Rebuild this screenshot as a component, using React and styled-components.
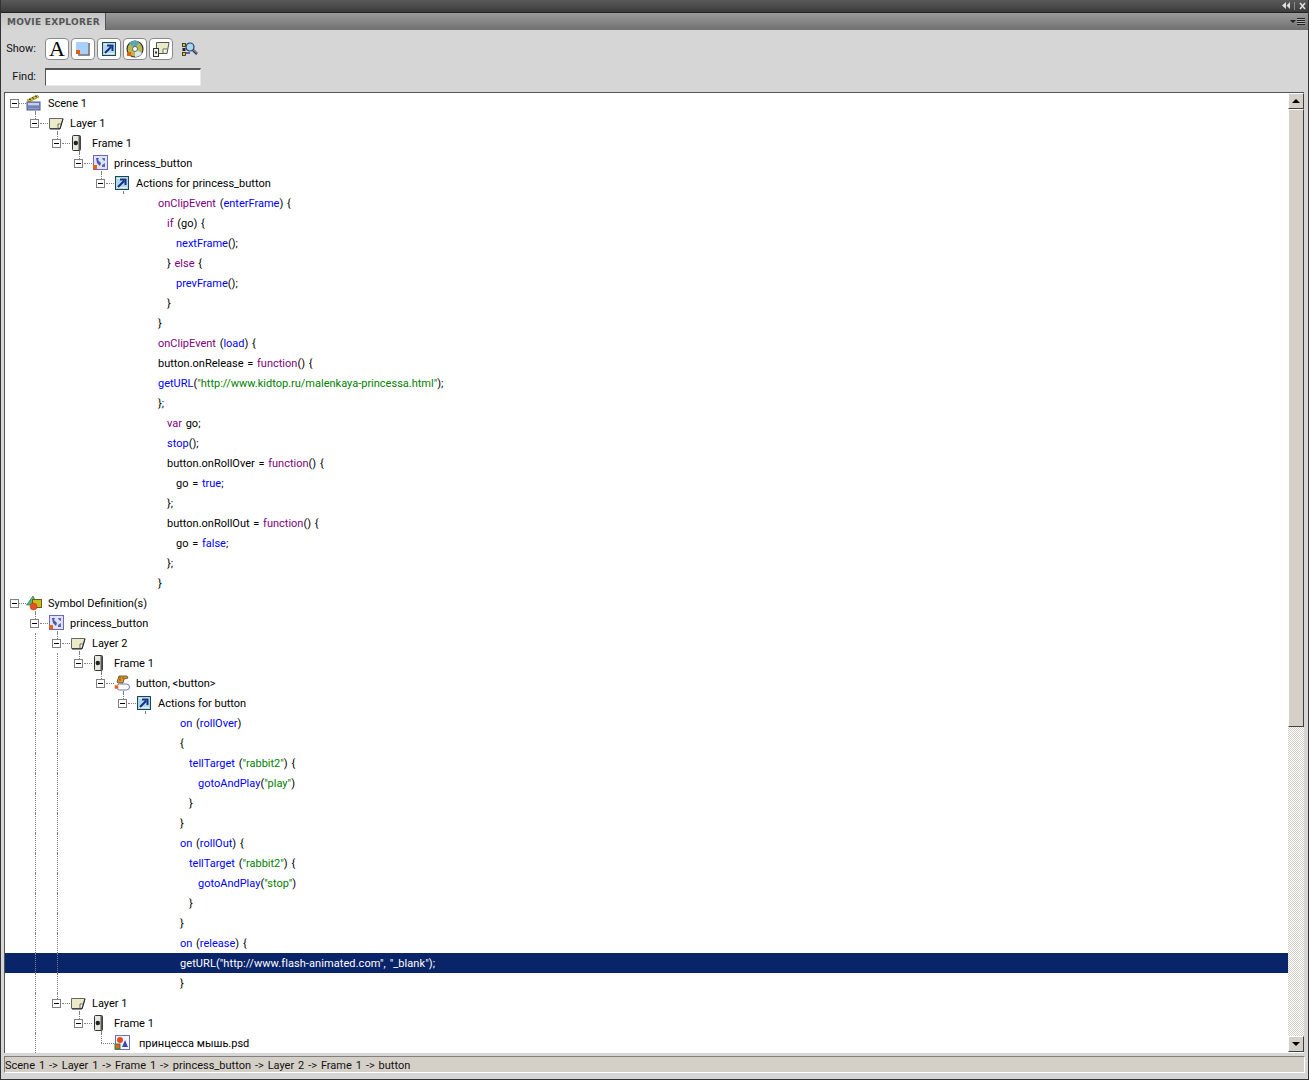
import styled, { createGlobalStyle } from "styled-components";

const GlobalStyle = createGlobalStyle`
  html, body {
    margin: 0;
    padding: 0;
    background: #d6d6d6;
  }
`;

const FONT = `Roboto, "Noto Sans", sans-serif`;

/* icons */
const SceneIcon = () => (
  <svg width="16" height="16" viewBox="0 0 16 16">
    <path d="M1 5 L11 0 L13 2 L3 7 Z" fill="#d8c020" stroke="#6a5a10" strokeWidth="0.5" />
    <path d="M3 4 L5 5 M6 2.5 L8 3.5 M9 1 L11 2" stroke="#333" strokeWidth="1" />
    <rect x="1" y="7" width="13" height="8" fill="#8c9cc8" stroke="#4a5a88" />
    <rect x="2" y="8" width="11" height="2" fill="#c8d0e8" />
    <path d="M2 12 H13" stroke="#5a6a98" />
  </svg>
);
const LayerIcon = () => (
  <svg width="16" height="16" viewBox="0 0 16 16">
    <path d="M1.5 3.5 H15 L12 13.5 H1.5 Z" fill="#ecebc8" stroke="#666" />
    <path d="M10 13 V9 H13.5" fill="#fff" stroke="#666" />
    <path d="M15 4 L12 14 H2" fill="none" stroke="#222" />
  </svg>
);
const FrameIcon = () => (
  <svg width="16" height="16" viewBox="0 0 16 16">
    <rect x="2.5" y="0.5" width="8" height="15" rx="1" fill="#e8e8dc" stroke="#333" />
    <rect x="8.5" y="1" width="2" height="14" fill="#555" />
    <circle cx="5.8" cy="8" r="2.2" fill="#222" />
  </svg>
);
const ClipIcon = () => (
  <svg width="16" height="16" viewBox="0 0 16 16">
    <rect x="1.5" y="0.5" width="14" height="14" fill="#dfe2f8" stroke="#6a68b8" />
    <path d="M4 3 H7 L6 5 L9 8 L8 11 L5 8 Z" fill="#4a58a8" />
    <path d="M10 3 H13 V6 L11 5 Z M10 10 L13 8 V12 H10 Z" fill="#5a68b8" />
    <rect x="1" y="10" width="4" height="4" fill="#f06010" />
  </svg>
);
const ActionsIcon = () => (
  <svg width="16" height="16" viewBox="0 0 16 16">
    <rect x="1.5" y="1.5" width="13" height="13" fill="#b0d8e8" stroke="#1c4a4a" />
    <path d="M3 3 H13 V4 H3 Z M3 12 H13 V13 H3 Z" fill="#e8f4f8" />
    <path d="M4 12 L10 6 M6 4.5 H11.5 V10" fill="none" stroke="#14308a" strokeWidth="2" />
  </svg>
);
const SymbolIcon = () => (
  <svg width="16" height="16" viewBox="0 0 16 16">
    <path d="M0.5 10 L7 1 L9.5 6 V10 Z" fill="#50b880" stroke="#2a7850" strokeWidth="0.7" />
    <rect x="6.5" y="4.5" width="9" height="8" fill="#c8bc20" stroke="#6a6010" />
    <circle cx="7.5" cy="11.5" r="3.5" fill="#e85020" stroke="#b03810" strokeWidth="0.5" />
  </svg>
);
const ButtonIcon = () => (
  <svg width="16" height="16" viewBox="0 0 16 16">
    <path d="M3 7 L5 1 H13 L14 3 L10 4 L9 8 H4 Z" fill="#d89838" stroke="#6a4010" strokeWidth="0.8" />
    <path d="M6 2 V6 M9 2 V4" stroke="#7a4a10" strokeWidth="0.8" />
    <rect x="2.5" y="9" width="13" height="6" rx="3" fill="#fff" stroke="#6a78b0" />
    <rect x="0.5" y="10" width="4" height="4" fill="#f06010" stroke="#fff" strokeWidth="0.5" />
  </svg>
);
const PsdIcon = () => (
  <svg width="16" height="16" viewBox="0 0 16 16">
    <rect x="1.5" y="0.5" width="14" height="14" fill="#f4f4ff" stroke="#6a70b8" />
    <circle cx="6" cy="5" r="3" fill="#e84a20" />
    <path d="M8 12 L11 5 L14 12 Z" fill="#3a48b0" />
    <rect x="1" y="9" width="5" height="5" fill="#f06010" stroke="#208040" />
  </svg>
);
const SquareIcon = () => (
  <svg width="16" height="16" viewBox="0 0 16 16">
    <rect x="1" y="1" width="12" height="12" fill="#a8d0f8" />
    <path d="M14 2 V14 H3" fill="none" stroke="#666" strokeWidth="1.5" />
    <rect x="1" y="9" width="4" height="4" fill="#e06010" />
  </svg>
);
const DiscIcon = () => (
  <svg width="18" height="18" viewBox="0 0 18 18">
    <circle cx="9" cy="9" r="8" fill="#b8b850" stroke="#333" strokeWidth="1.2" />
    <path d="M9 9 L3 3 A8 8 0 0 1 13 2 Z" fill="#58a8b8" />
    <path d="M9 9 L16 13 A8 8 0 0 1 9 17 Z" fill="#d8e8f0" />
    <circle cx="9" cy="9" r="2.5" fill="#fff" stroke="#666" />
    <rect x="1" y="12" width="4" height="4" fill="#e06010" />
  </svg>
);
const LayerFrameIcon = () => (
  <svg width="18" height="18" viewBox="0 0 18 18">
    <path d="M4.5 2.5 H17 L15 13.5 H4.5 Z" fill="#ecebc8" stroke="#555" />
    <path d="M11 13 V9 H15.5" fill="#fff" stroke="#666" />
    <rect x="1.5" y="8.5" width="5" height="8" fill="#f4f4ec" stroke="#333" />
    <rect x="3" y="11.5" width="2" height="2" fill="#333" />
  </svg>
);
const FindIcon = () => (
  <svg width="16" height="16" viewBox="0 0 16 16">
    <rect x="0.5" y="2.5" width="3" height="3" fill="#d8c820" stroke="#222" strokeWidth="0.8" />
    <rect x="0.5" y="7" width="3" height="3" fill="#222" />
    <rect x="0.5" y="11.5" width="3" height="3" fill="#d8c820" stroke="#222" strokeWidth="0.8" />
    <path d="M4 8 H9 M4 12 H8" stroke="#3040a0" strokeWidth="1.5" />
    <circle cx="8" cy="6" r="4" fill="#a8d8f0" stroke="#2a3a70" strokeWidth="1.2" />
    <path d="M11 9 L15 13" stroke="#1a2a88" strokeWidth="2.5" />
    <path d="M11.5 9 L15 12.5" stroke="#e8d020" strokeWidth="1" />
  </svg>
);

const ICONS = {
  scene: SceneIcon,
  layer: LayerIcon,
  frame: FrameIcon,
  clip: ClipIcon,
  actions: ActionsIcon,
  symbol: SymbolIcon,
  button: ButtonIcon,
  psd: PsdIcon,
};

/* colored code tokens */
const k = (t) => ({ t, c: "#800080" });
const b = (t) => ({ t, c: "#0000ff" });
const g = (t) => ({ t, c: "#008000" });

const node = (level, icon, label, opts = {}) => ({ level, icon, label, ...opts });
const code = (x, tokens, opts = {}) => ({ code: true, x, tokens, ...opts });

const s1 = 158;
const s2 = 180;
const both = { guides: [1, 2] };

const ROWS = [
  node(0, "scene", "Scene 1", { stub: true, first: true }),
  node(1, "layer", "Layer 1", { stub: true }),
  node(2, "frame", "Frame 1", { stub: true }),
  node(3, "clip", "princess_button", { stub: true }),
  node(4, "actions", "Actions for princess_button", { stub: true }),
  code(s1, [k("onClipEvent"), " (", b("enterFrame"), ") {"]),
  code(s1 + 9, [k("if"), " (go) {"]),
  code(s1 + 18, [b("nextFrame"), "();"]),
  code(s1 + 9, ["} ", k("else"), " {"]),
  code(s1 + 18, [b("prevFrame"), "();"]),
  code(s1 + 9, ["}"]),
  code(s1, ["}"]),
  code(s1, [k("onClipEvent"), " (", b("load"), ") {"]),
  code(s1, ["button.onRelease = ", k("function"), "() {"]),
  code(s1, [b("getURL"), "(", g('"http://www.kidtop.ru/malenkaya-princessa.html"'), ");"]),
  code(s1, ["};"]),
  code(s1 + 9, [k("var"), " go;"]),
  code(s1 + 9, [b("stop"), "();"]),
  code(s1 + 9, ["button.onRollOver = ", k("function"), "() {"]),
  code(s1 + 18, ["go = ", b("true"), ";"]),
  code(s1 + 9, ["};"]),
  code(s1 + 9, ["button.onRollOut = ", k("function"), "() {"]),
  code(s1 + 18, ["go = ", b("false"), ";"]),
  code(s1 + 9, ["};"]),
  code(s1, ["}"]),
  node(0, "symbol", "Symbol Definition(s)", { stub: true, first: true }),
  node(1, "clip", "princess_button", { stub: true, guides: [1] }),
  node(2, "layer", "Layer 2", { stub: true, ...both }),
  node(3, "frame", "Frame 1", { stub: true, ...both }),
  node(4, "button", "button, <button>", { stub: true, ...both }),
  node(5, "actions", "Actions for button", { stub: true, ...both }),
  code(s2, [b("on"), " (", b("rollOver"), ")"], both),
  code(s2, ["{"], both),
  code(s2 + 9, [b("tellTarget"), " (", g('"rabbit2"'), ") {"], both),
  code(s2 + 18, [b("gotoAndPlay"), "(", g('"play"'), ")"], both),
  code(s2 + 9, ["}"], both),
  code(s2, ["}"], both),
  code(s2, [b("on"), " (", b("rollOut"), ") {"], both),
  code(s2 + 9, [b("tellTarget"), " (", g('"rabbit2"'), ") {"], both),
  code(s2 + 18, [b("gotoAndPlay"), "(", g('"stop"'), ")"], both),
  code(s2 + 9, ["}"], both),
  code(s2, ["}"], both),
  code(s2, [b("on"), " (", b("release"), ") {"], both),
  code(s2, ['getURL("http://www.flash-animated.com", "_blank");'], { ...both, selected: true }),
  code(s2, ["}"], both),
  node(2, "layer", "Layer 1", { stub: true, guides: [1] }),
  node(3, "frame", "Frame 1", { stub: true, guides: [1] }),
  node(4, "psd", "принцесса мышь.psd", { leaf: true, guides: [1] }),
];

const Tree = ({ row }) => {
  const Icon = ICONS[row.icon];
  const guides = row.guides || [];
  const cells = [];
  for (let i = 0; i < row.level; i++) {
    cells.push(<Indent key={i} $line={guides.includes(i)} />);
  }
  return (
    <>
      {cells}
      <ToggleCell $first={row.first} $leaf={row.leaf}>
        {!row.leaf && <Toggle />}
      </ToggleCell>
      <IconCell $stub={row.stub}>
        <Icon />
      </IconCell>
      <Label $leaf={row.leaf}>{row.label}</Label>
    </>
  );
};

const CodeLine = ({ row }) => {
  const guides = row.guides || [];
  return (
    <>
      <Indent $line={guides.includes(0)} />
      <Indent $line={guides.includes(1)} />
      <Indent $line={guides.includes(2)} />
      <Code $x={row.x - 70} $selected={row.selected}>
        {row.tokens.map((tk, i) =>
          typeof tk === "string" ? (
            <span key={i}>{tk}</span>
          ) : (
            <Token key={i} $color={tk.c}>
              {tk.t}
            </Token>
          )
        )}
      </Code>
    </>
  );
};

const App = () => {
  return (
    <>
      <GlobalStyle />
      <Window>
        <TitleBar>
          <svg width="8" height="8" viewBox="0 0 8 8">
            <path d="M4 0 V7 L0 3.5 Z M8 0 V7 L4.5 3.5 Z" fill="#ddd" />
          </svg>
          <Sep />
          <svg width="7" height="8" viewBox="0 0 7 8">
            <path d="M1 1 L6 7 M6 1 L1 7" stroke="#ddd" strokeWidth="1.6" />
          </svg>
        </TitleBar>
        <TabBar>
          <Tab>MOVIE EXPLORER</Tab>
          <MenuBtn>
            <MenuArrow />
            <MenuLines />
          </MenuBtn>
        </TabBar>
        <Panel>
          <ShowRow>
            <FieldLabel>Show:</FieldLabel>
            <Tools>
              <ToolBtn>
                <BigA>A</BigA>
              </ToolBtn>
              <ToolBtn>
                <SquareIcon />
              </ToolBtn>
              <ToolBtn>
                <ActionsIcon />
              </ToolBtn>
              <ToolBtn>
                <DiscIcon />
              </ToolBtn>
              <ToolBtn>
                <LayerFrameIcon />
              </ToolBtn>
              <PlainTool>
                <FindIcon />
              </PlainTool>
            </Tools>
          </ShowRow>
          <FindRow>
            <FieldLabel>Find:</FieldLabel>
            <FindInput />
          </FindRow>
          <TreeBox>
            <TreeList>
              {ROWS.map((row, i) => (
                <Row key={i} $selected={row.selected}>
                  {row.code ? <CodeLine row={row} /> : <Tree row={row} />}
                </Row>
              ))}
            </TreeList>
            <Scrollbar>
              <ScrollBtn>
                <ArrowUp />
              </ScrollBtn>
              <Thumb />
              <Track />
              <ScrollBtn>
                <ArrowDown />
              </ScrollBtn>
            </Scrollbar>
          </TreeBox>
          <StatusBar>Scene 1 -&gt; Layer 1 -&gt; Frame 1 -&gt; princess_button -&gt; Layer 2 -&gt; Frame 1 -&gt; button</StatusBar>
        </Panel>
      </Window>
    </>
  );
};

export default App;

const Window = styled.div`
  width: 1309px;
  height: 1080px;
  display: flex;
  flex-direction: column;
  box-sizing: border-box;
  overflow: hidden;
  font-family: ${FONT};
  font-size: 11px;
  color: #000;
  background: #d6d6d6;
  border-left: 1px solid #333;
  border-right: 1px solid #333;
  border-bottom: 1px solid #333;
`;

const TitleBar = styled.div`
  height: 13px;
  flex-shrink: 0;
  display: flex;
  align-items: center;
  justify-content: flex-end;
  gap: 4px;
  padding-right: 2px;
  box-sizing: border-box;
  background: linear-gradient(#5a5a5a, #3c3c3c);
  border-bottom: 1px solid #222;
`;

const Sep = styled.span`
  width: 1px;
  height: 8px;
  background: #888;
`;

const TabBar = styled.div`
  height: 17px;
  flex-shrink: 0;
  display: flex;
  align-items: stretch;
  justify-content: space-between;
  background: linear-gradient(#9a9a9a, #707070);
`;

const Tab = styled.div`
  width: 105px;
  padding-left: 6px;
  box-sizing: border-box;
  font-family: "DejaVu Sans", sans-serif;
  font-size: 9px;
  font-weight: 700;
  letter-spacing: 0.3px;
  line-height: 18px;
  color: #555;
  white-space: nowrap;
  background: linear-gradient(#c4c4c4, #d6d6d6);
  border-right: 1px solid #555;
`;

const MenuBtn = styled.div`
  display: flex;
  align-items: center;
  gap: 1px;
  padding-right: 3px;
`;

const MenuArrow = styled.span`
  width: 0;
  height: 0;
  border-left: 3px solid transparent;
  border-right: 3px solid transparent;
  border-top: 3px solid #222;
`;

const MenuLines = styled.span`
  width: 8px;
  height: 7px;
  background: repeating-linear-gradient(#222 0 1px, #aaa 1px 2px);
`;

const Panel = styled.div`
  flex: 1;
  min-height: 0;
  display: flex;
  flex-direction: column;
  padding: 0 3px 6px;
`;

const ShowRow = styled.div`
  display: flex;
  align-items: center;
  height: 22px;
  margin-top: 8px;
`;

const FieldLabel = styled.div`
  width: 41px;
  flex-shrink: 0;
  text-align: right;
  padding-right: 9px;
  box-sizing: border-box;
  line-height: 15px;
  height: 16px;
  color: #111;
`;

const Tools = styled.div`
  display: flex;
  align-items: center;
  gap: 2px;
`;

const ToolBtn = styled.div`
  width: 24px;
  height: 22px;
  display: flex;
  align-items: center;
  justify-content: center;
  box-sizing: border-box;
  background: #fff;
  border: 1px solid #8a8a8a;
  border-radius: 4px;
`;

const PlainTool = styled.div`
  width: 16px;
  height: 22px;
  margin-left: 7px;
  display: flex;
  align-items: center;
`;

const BigA = styled.span`
  font-family: "Liberation Serif", serif;
  font-size: 22px;
  line-height: 20px;
`;

const FindRow = styled.div`
  display: flex;
  align-items: center;
  height: 18px;
  margin-top: 8px;
`;

const FindInput = styled.input`
  width: 156px;
  height: 18px;
  padding: 0;
  box-sizing: border-box;
  background: #fff;
  border: 1px solid #e8e8e8;
  border-top: 2px solid #555;
  border-left: 1px solid #555;
  outline: none;
`;

const TreeBox = styled.div`
  flex: 1;
  min-height: 0;
  margin-top: 6px;
  margin-right: 1px;
  display: flex;
  border-top: 1px solid #555;
  border-left: 1px solid #555;
  background: #fff;
`;

const TreeList = styled.div`
  flex: 1;
  min-width: 0;
  overflow: hidden;
  background: #fff;
`;

const Row = styled.div`
  height: 20px;
  display: flex;
  align-items: stretch;
  color: ${(p) => (p.$selected ? "#fff" : "#000")};
  background: ${(p) => (p.$selected ? "#0a246a" : "transparent")};
  white-space: nowrap;
  line-height: 22px;

  & > :first-child {
    margin-left: -1px;
  }
`;

const Indent = styled.div`
  width: 22px;
  flex-shrink: 0;
  position: relative;

  &::before {
    content: "";
    display: ${(p) => (p.$line ? "block" : "none")};
    position: absolute;
    left: 9px;
    top: 0;
    bottom: 0;
    border-left: 1px dotted #808080;
  }
`;

const ToggleCell = styled.div`
  width: 22px;
  flex-shrink: 0;
  position: relative;
  display: flex;
  align-items: center;
  padding-left: ${(p) => (p.$first ? "6px" : "4px")};
  box-sizing: border-box;

  &::before {
    content: "";
    display: ${(p) => (p.$first ? "none" : "block")};
    position: absolute;
    left: 9px;
    top: 0;
    height: ${(p) => (p.$leaf ? "10px" : "6px")};
    border-left: 1px dotted #808080;
  }

  &::after {
    content: "";
    position: absolute;
    left: ${(p) => (p.$leaf ? "9px" : "14px")};
    right: 0;
    top: 10px;
    border-top: 1px dotted #808080;
  }
`;

const Toggle = styled.div`
  width: 9px;
  height: 9px;
  box-sizing: border-box;
  background: #fff;
  border: 1px solid #808080;
  position: relative;

  &::after {
    content: "";
    position: absolute;
    left: 1px;
    top: 3px;
    width: 5px;
    height: 1px;
    background: #000;
  }
`;

const IconCell = styled.div`
  width: 22px;
  flex-shrink: 0;
  position: relative;
  display: flex;
  align-items: center;

  svg {
    display: block;
  }

  &::after {
    content: "";
    display: ${(p) => (p.$stub ? "block" : "none")};
    position: absolute;
    left: 9px;
    top: 18px;
    bottom: 0;
    border-left: 1px dotted #808080;
  }
`;

const Label = styled.div`
  flex-shrink: 0;
  padding-left: ${(p) => (p.$leaf ? "3px" : "0")};
`;

const Code = styled.div`
  padding-left: ${(p) => p.$x}px;
  flex-shrink: 0;
  word-spacing: 1px;
  letter-spacing: ${(p) => (p.$selected ? "0.08px" : "0")};
`;

const Token = styled.span`
  color: ${(p) => p.$color};
`;

const Scrollbar = styled.div`
  width: 16px;
  flex-shrink: 0;
  display: flex;
  flex-direction: column;
  padding-bottom: 1px;
`;

const ScrollBtn = styled.div`
  width: 16px;
  height: 16px;
  flex-shrink: 0;
  display: flex;
  align-items: center;
  justify-content: center;
  box-sizing: border-box;
  background: #d4d0c8;
  border: 1px solid;
  border-color: #fff #404040 #404040 #fff;
`;

const ArrowUp = styled.span`
  width: 0;
  height: 0;
  border-left: 4px solid transparent;
  border-right: 4px solid transparent;
  border-bottom: 4px solid #000;
`;

const ArrowDown = styled.span`
  width: 0;
  height: 0;
  border-left: 4px solid transparent;
  border-right: 4px solid transparent;
  border-top: 4px solid #000;
`;

const Thumb = styled.div`
  height: 618px;
  flex-shrink: 0;
  box-sizing: border-box;
  background: #d4d0c8;
  border: 1px solid;
  border-color: #fff #404040 #404040 #fff;
`;

const Track = styled.div`
  flex: 1;
  background: repeating-conic-gradient(#d4d0c8 0 25%, #fff 0 50%) 0 0 / 2px 2px;
`;

const StatusBar = styled.div`
  height: 17px;
  flex-shrink: 0;
  margin-top: 3px;
  box-sizing: border-box;
  line-height: 17px;
  word-spacing: 1.2px;
  color: #111;
  background: #d4d0c8;
  border-top: 1px solid #808080;
  border-left: 1px solid #808080;
  border-right: 1px solid #fff;
  border-bottom: 1px solid #fff;
`;
